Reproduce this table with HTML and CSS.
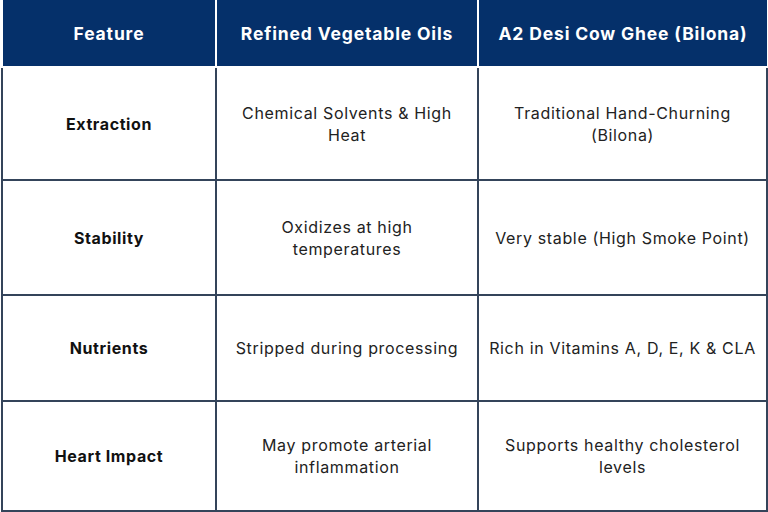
FILE: index.html
```html
<!DOCTYPE html>
<html>
<head>
<meta charset="utf-8">
<link rel="stylesheet" href="styles.css">
</head>
<body>
<div class="table">
  <div class="head">
    <div class="hcell">Feature</div>
    <div class="hcell">Refined Vegetable Oils</div>
    <div class="hcell">A2 Desi Cow Ghee (Bilona)</div>
  </div>
  <div class="rows">
    <div class="row r1">
      <div class="cell label">Extraction</div>
      <div class="cell">Chemical Solvents &amp; High<br>Heat</div>
      <div class="cell">Traditional Hand-Churning<br>(Bilona)</div>
    </div>
    <div class="row r2">
      <div class="cell label">Stability</div>
      <div class="cell">Oxidizes at high<br>temperatures</div>
      <div class="cell">Very stable (High Smoke Point)</div>
    </div>
    <div class="row r3">
      <div class="cell label">Nutrients</div>
      <div class="cell">Stripped during processing</div>
      <div class="cell">Rich in Vitamins A, D, E, K &amp; CLA</div>
    </div>
    <div class="row r4">
      <div class="cell label">Heart Impact</div>
      <div class="cell">May promote arterial<br>inflammation</div>
      <div class="cell">Supports healthy cholesterol<br>levels</div>
    </div>
  </div>
</div>
</body>
</html>
```
FILE: styles.css
```css
html, body {
  margin: 0;
  padding: 0;
  background: #ffffff;
}
body {
  width: 768px;
  height: 512px;
  overflow: hidden;
  font-family: Inter, "Open Sans", sans-serif;
}
.table {
  display: flex;
  flex-direction: column;
}
.head {
  display: grid;
  grid-template-columns: 212px 260px 288px;
  column-gap: 2px;
  margin-left: 3px;
  height: 66px;
}
.hcell {
  background: #05306a;
  color: #ffffff;
  font-weight: 700;
  font-size: 17.5px;
  letter-spacing: 0.85px;
  display: flex;
  align-items: center;
  justify-content: center;
}
.rows {
  margin-top: 2px;
  margin-left: 1px;
  border-left: 2px solid #34445a;
  border-right: 2px solid #34445a;
  border-bottom: 2px solid #34445a;
  width: 763px;
}
.row {
  display: grid;
  grid-template-columns: 212px 262px 1fr;
}
.row + .row {
  border-top: 2px solid #34445a;
}
.r1 { height: 111px; }
.r2 { height: 113px; }
.r3 { height: 104px; }
.r4 { height: 108px; }
.cell {
  display: flex;
  align-items: center;
  justify-content: center;
  text-align: center;
  font-size: 16px;
  letter-spacing: 0.65px;
  line-height: 22px;
  color: #222222;
}
.cell + .cell {
  border-left: 2px solid #34445a;
}
.label {
  font-weight: 700;
  letter-spacing: 0.6px;
  color: #111111;
}
```
